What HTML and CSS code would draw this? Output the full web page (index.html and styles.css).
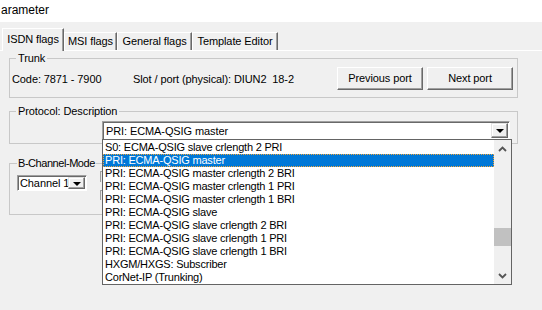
FILE: index.html
```html
<!DOCTYPE html>
<html>
<head>
<meta charset="utf-8">
<link rel="stylesheet" href="styles.css">
</head>
<body>
<div class="title">arameter</div>
<div class="tabs">
  <div class="tab sel w1">ISDN flags</div>
  <div class="tab w2">MSI flags</div>
  <div class="tab w3">General flags</div>
  <div class="tab w4">Template Editor</div>
</div>
<div class="panel">
  <fieldset class="group trunk">
    <legend>Trunk</legend>
    <div class="trunk-row">
      <span class="code">Code: 7871 - 7900</span>
      <span class="slot">Slot / port (physical): DIUN2&nbsp; 18-2</span>
      <div class="btns">
        <div class="btn">Previous port</div>
        <div class="btn">Next port</div>
      </div>
    </div>
  </fieldset>
  <fieldset class="group proto">
    <legend>Protocol: Description</legend>
    <div class="proto-body">
      <div class="combo big">
        <span class="ctext">PRI: ECMA-QSIG master</span>
        <div class="dbtn"><span class="tri"></span></div>
      </div>
    </div>
  </fieldset>
  <fieldset class="group bch">
    <legend class="tight">B-Channel-Mode</legend>
    <div class="bch-row">
      <div class="combo small">
        <span class="ctext">Channel 1</span>
        <div class="dbtn"><span class="tri"></span></div>
      </div>
      <div class="hidden-col">
        <div class="peek p1"></div>
        <div class="peek p2"></div>
      </div>
    </div>
  </fieldset>
</div>
<div class="droplist">
  <div class="items">
    <div class="item">S0: ECMA-QSIG slave crlength 2 PRI</div>
    <div class="item selected">PRI: ECMA-QSIG master</div>
    <div class="item">PRI: ECMA-QSIG master crlength 2 BRI</div>
    <div class="item">PRI: ECMA-QSIG master crlength 1 PRI</div>
    <div class="item">PRI: ECMA-QSIG master crlength 1 BRI</div>
    <div class="item">PRI: ECMA-QSIG slave</div>
    <div class="item">PRI: ECMA-QSIG slave crlength 2 BRI</div>
    <div class="item">PRI: ECMA-QSIG slave crlength 1 PRI</div>
    <div class="item">PRI: ECMA-QSIG slave crlength 1 BRI</div>
    <div class="item">HXGM/HXGS: Subscriber</div>
    <div class="item">CorNet-IP (Trunking)</div>
  </div>
  <div class="sbar">
    <div class="sarrow"><svg width="9" height="6" viewBox="0 0 9 6"><path d="M1 5 L4.5 1.5 L8 5" fill="none" stroke="#555" stroke-width="1.8"/></svg></div>
    <div class="strack"><div class="thumb"></div></div>
    <div class="sarrow"><svg width="9" height="6" viewBox="0 0 9 6"><path d="M1 1 L4.5 4.5 L8 1" fill="none" stroke="#555" stroke-width="1.8"/></svg></div>
  </div>
</div>
</body>
</html>
```
FILE: styles.css
```css
* { box-sizing: border-box; }
body {
  margin: 0;
  width: 542px;
  height: 310px;
  overflow: hidden;
  position: relative;
  background: #f0f0f0;
  font: 11px "Liberation Sans", Arial, sans-serif;
  letter-spacing: -0.1px;
  color: #000;
}
.title {
  height: 22px;
  background: #fff;
  font-size: 12px;
  line-height: 20px;
  padding-left: 1px;
  letter-spacing: 0;
}
.tabs {
  display: flex;
  align-items: flex-end;
  height: 28px;
  padding-left: 2px;
}
.tab {
  height: 18px;
  line-height: 16px;
  text-align: center;
  border-top: 1px solid #fff;
  border-left: 1px solid #fff;
  border-right: 1px solid #696969;
  box-shadow: inset -1px 0 #a0a0a0;
}
.tab.sel {
  height: 23px;
  line-height: 21px;
  margin-bottom: -1px;
  position: relative;
  z-index: 1;
  background: #f0f0f0;
}
.w1 { width: 62px; }
.w2 { width: 53px; }
.w3 { width: 75px; }
.w4 { width: 86px; }
.panel {
  border-top: 1px solid #fff;
  padding-left: 9px;
  width: 560px;
}
.group {
  margin: 0;
  padding: 0;
  border: 1px solid #c8c8c8;
  width: 509px;
  min-width: 0;
}
.group legend {
  margin-left: 6px;
  padding: 0 2px;
  line-height: 13px;
  font-size: 11px;
}
.group legend.tight { letter-spacing: -0.45px; padding: 0 1px; margin-left: 7px; }
.trunk { margin-top: 1px; }
.trunk-row {
  display: flex;
  align-items: center;
  padding: 2px 4px 7px 2px;
}
.code { width: 121px; }
.btns {
  margin-left: auto;
  display: flex;
  gap: 4px;
}
.btn {
  width: 86px;
  height: 23px;
  line-height: 21px;
  text-align: center;
  background: #f0f0f0;
  border: 1px solid;
  border-color: #fff #696969 #696969 #fff;
  box-shadow: inset -1px -1px #a0a0a0;
}
.proto { margin-top: 7px; }
.proto-body { padding: 3px 0 3px 92px; }
.combo {
  position: relative;
  background: #fff;
  border: 1px solid;
  border-color: #a0a0a0 #fff #fff #a0a0a0;
  box-shadow: inset 1px 1px #696969;
  display: flex;
  align-items: center;
}
.combo.big { width: 408px; height: 19px; }
.combo.small { width: 70px; height: 16px; }
.ctext { padding-left: 2px; white-space: nowrap; }
.big .ctext { padding-left: 3px; }
.dbtn {
  position: absolute;
  right: 1px;
  top: 1px;
  bottom: 1px;
  width: 17px;
  background: #f0f0f0;
  border: 1px solid;
  border-color: #e3e3e3 #696969 #696969 #e3e3e3;
  box-shadow: inset -1px -1px #a0a0a0, inset 1px 1px #fff;
  display: flex;
  align-items: center;
  justify-content: center;
}
.tri {
  width: 0;
  height: 0;
  border-left: 4px solid transparent;
  border-right: 4px solid transparent;
  border-top: 4px solid #000;
  margin-top: 1px;
}
.bch { margin-top: 13px; width: 330px; }
.bch-row { display: flex; align-items: flex-start; padding: 1px 0 14px 7px; }
.small { margin-top: 4px; }
.hidden-col {
  margin-left: 13px;
  display: flex;
  flex-direction: column;
  gap: 8px;
}
.peek {
  width: 30px;
  border-left: 1px solid #a0a0a0;
  border-top: 1px solid #a0a0a0;
  background: #e8e8e8;
}
.p1 { height: 11px; }
.p2 { height: 10px; }
.droplist {
  position: absolute;
  left: 102px;
  top: 139px;
  width: 410px;
  height: 146px;
  border: 1px solid #646464;
  background: #fff;
  display: flex;
  z-index: 5;
}
.items { flex: 1; padding-top: 1px; }
.item {
  height: 13px;
  line-height: 13px;
  padding-left: 2px;
  white-space: nowrap;
  overflow: hidden;
  letter-spacing: -0.2px;
}
.item.selected {
  background: #0078d7;
  color: #fff;
  outline: 1px dotted #f2a63a;
  outline-offset: -1px;
}
.sbar {
  width: 17px;
  background: #f0f0f0;
  display: flex;
  flex-direction: column;
}
.sarrow {
  height: 17px;
  display: flex;
  align-items: center;
  justify-content: center;
}
.strack { flex: 1; padding-top: 71px; }
.thumb { height: 18px; background: #c1c1c1; }
```
